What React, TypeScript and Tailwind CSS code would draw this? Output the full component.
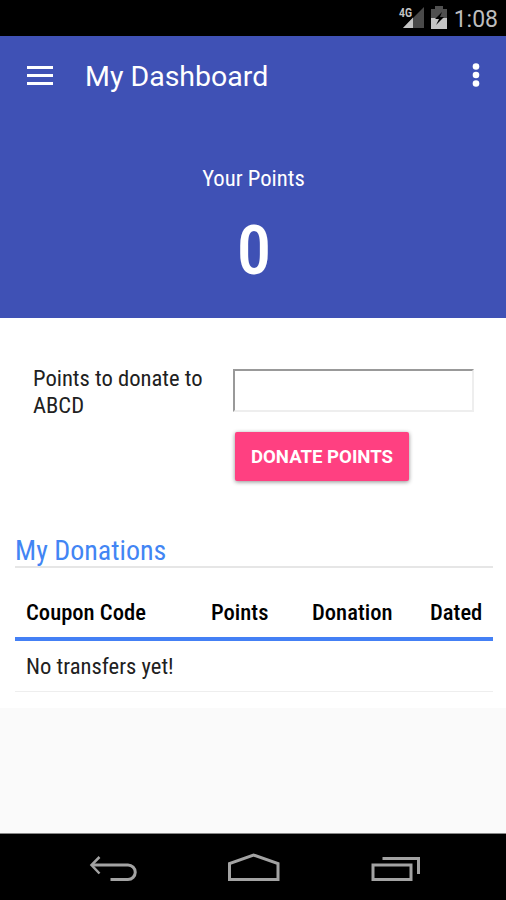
const COLUMNS = [
  { label: "Coupon Code", width: "w-[185px]" },
  { label: "Points", width: "w-[101px]" },
  { label: "Donation", width: "w-[118px]" },
  { label: "Dated", width: "w-[74px]" },
];

function StatusBar() {
  return (
    <div className="h-9 bg-black flex items-center justify-end pr-2 text-[#bdbdbd]">
      <svg width="26" height="24" viewBox="0 0 26 24" className="mr-[7px]">
        <path d="M26 1v21H5z" fill="#4a4a4a" />
        <path d="M15 11.500v10.500H5z" fill="#c4c4c4" />
        <path d="M0 0h14v12H0z" fill="#000" />
        <text x="1" y="11" fontFamily="Roboto" fontSize="13" fontWeight="700" fill="#c4c4c4" textLength="13" lengthAdjust="spacingAndGlyphs">4G</text>
      </svg>
      <svg width="16" height="24" viewBox="0 0 16 24" className="mr-[7px]">
        <path d="M4 0h8v3h4v9H0V3h4z" fill="#505050" />
        <path d="M0 12h16v11H0z" fill="#c4c4c4" />
        <path d="M11 6L4 13h4l-3 6 8-8H9z" fill="#000" />
      </svg>
      <span className="text-[23px] leading-none pt-[3px]">1:08</span>
    </div>
  );
}

function AppBar() {
  return (
    <div className="h-[78px] flex items-center text-white pl-[27px] pr-[26px]">
      <div className="w-[26px] h-[19px] flex flex-col justify-between">
        <div className="h-[3px] bg-white"></div>
        <div className="h-[3px] bg-white"></div>
        <div className="h-[3px] bg-white"></div>
      </div>
      <h1 className="ml-8 pt-[3px] text-[28.5px] leading-9 flex-1">My Dashboard</h1>
      <svg width="8" height="24" viewBox="0 0 8 24" fill="#fff">
        <circle cx="4" cy="3.500" r="3.300" />
        <circle cx="4" cy="12" r="3.300" />
        <circle cx="4" cy="20.500" r="3.300" />
      </svg>
    </div>
  );
}

function NavBar() {
  return (
    <div className="h-[67px] bg-black border-t border-[#888]">
      <svg width="506" height="66" viewBox="0 834 506 66" fill="none" stroke="#a3a3a3" strokeWidth="3">
        <path d="M92 865h36a6.800 6.800 0 0 1 0 14.500H110.500" />
        <path d="M99.500 857l-8 8 8 8.500" strokeWidth="2.500" />
        <path d="M229.500 879.500v-16l24-8.500 24.500 8.500v16z" />
        <path d="M373 865h38v14.500h-38zM382.500 858.500h36V874" />
      </svg>
    </div>
  );
}

export default function App() {
  return (
    <div className="w-[506px] h-[900px] bg-[#fafafa] flex flex-col overflow-hidden font-[Roboto,sans-serif] text-[#212121]">
      <StatusBar />

      {/* header */}
      <div className="h-[282px] bg-[#3f51b5] text-white">
        <AppBar />
        <div className="font-stretch-condensed text-center">
          <p className="pt-[49px] pl-px text-[22.7px] leading-8">Your Points</p>
          <p className="pt-[18px] pl-[2px] text-[69px] leading-[76px] font-medium">0</p>
        </div>
      </div>

      {/* content */}
      <div className="h-[390px] bg-white font-stretch-condensed text-[22.6px]">
        <div className="flex pt-[51px] pl-[33px]">
          <label className="w-[200px] leading-[27px] -mt-[4px]">
            Points to donate to<br />ABCD
          </label>
          <div>
            <input className="block w-[241px] h-[43px] bg-white border-2 border-t-[#999] border-l-[#999] border-r-[#eee] border-b-[#eee]" />
            <button className="block mt-5 ml-[2px] w-[174px] h-[49px] pt-[2px] rounded-[2px] bg-[#ff4081] text-white text-[18.6px] font-bold font-stretch-normal shadow-[0_1px_4px_rgba(0,0,0,0.45)]">
              DONATE POINTS
            </button>
          </div>
        </div>

        <div className="mt-[52px] ml-[15px] w-[478px]">
          <h2 className="h-[35px] text-[28px] leading-[36px] text-[#4285f4] border-b-2 border-[#e6e6e6]">My Donations</h2>
          <div className="flex h-[73px] pt-[18px] border-b-4 border-[#4480f5] font-medium text-black">
            {COLUMNS.map((c) => (
              <div key={c.label} className={`${c.width} pl-[11px] leading-[54px]`}>{c.label}</div>
            ))}
          </div>
          <div className="h-[51px] pl-[11px] leading-[51px] border-b border-[#eee]">No transfers yet!</div>
        </div>
      </div>

      <div className="flex-1"></div>
      <NavBar />
    </div>
  );
}
